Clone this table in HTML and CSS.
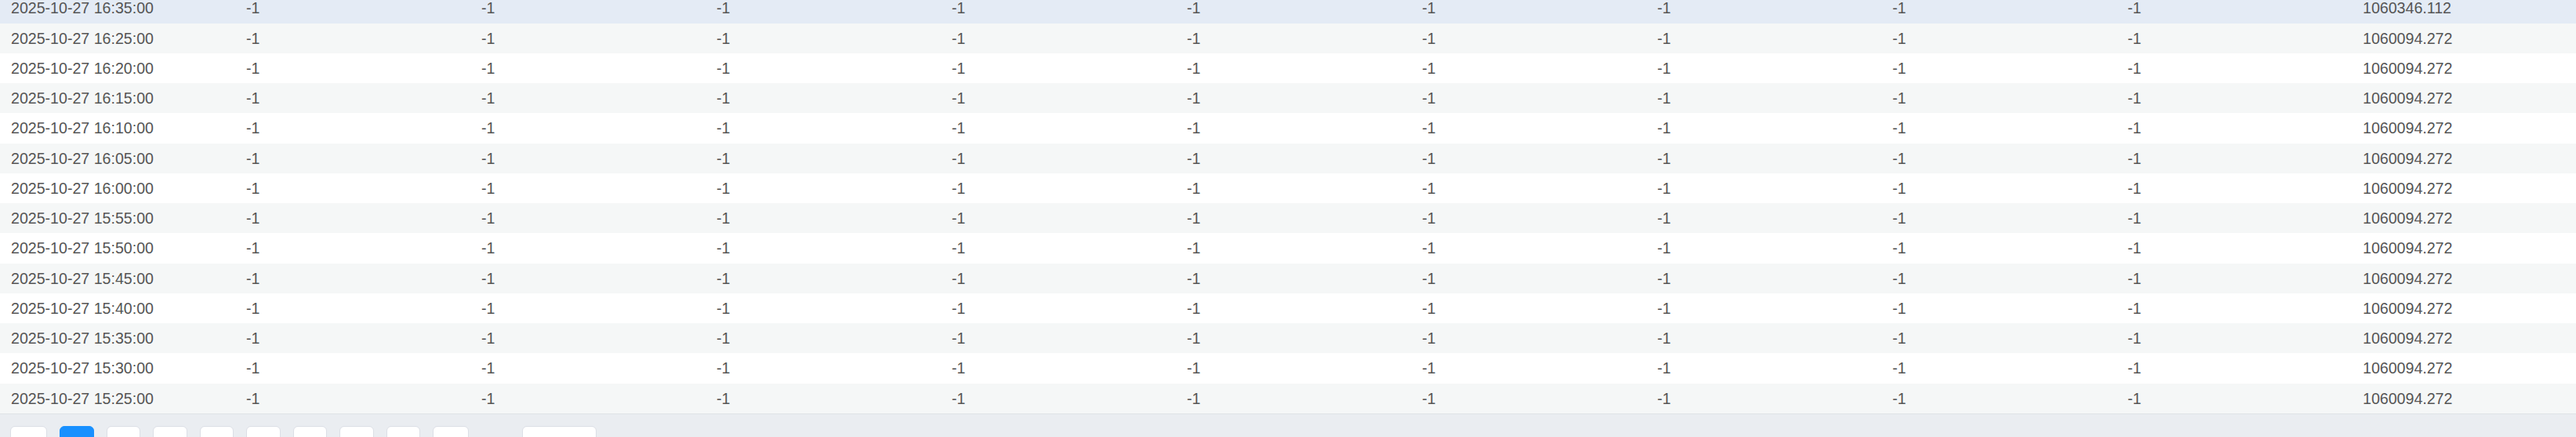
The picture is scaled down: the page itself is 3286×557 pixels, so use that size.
FILE: index.html
```html
<!DOCTYPE html>
<html>
<head>
<meta charset="utf-8">
<link rel="stylesheet" href="styles.css">
</head>
<body>
<div class="page">
  <div class="table-wrap">
    <table class="grid">
      <colgroup>
        <col><col><col><col><col><col><col><col><col><col><col>
      </colgroup>
      <tbody>
        <tr class="hover"><td>2025-10-27 16:35:00</td><td>-1</td><td>-1</td><td>-1</td><td>-1</td><td>-1</td><td>-1</td><td>-1</td><td>-1</td><td>-1</td><td>1060346.112</td></tr>
        <tr class="stripe"><td>2025-10-27 16:25:00</td><td>-1</td><td>-1</td><td>-1</td><td>-1</td><td>-1</td><td>-1</td><td>-1</td><td>-1</td><td>-1</td><td>1060094.272</td></tr>
        <tr><td>2025-10-27 16:20:00</td><td>-1</td><td>-1</td><td>-1</td><td>-1</td><td>-1</td><td>-1</td><td>-1</td><td>-1</td><td>-1</td><td>1060094.272</td></tr>
        <tr class="stripe"><td>2025-10-27 16:15:00</td><td>-1</td><td>-1</td><td>-1</td><td>-1</td><td>-1</td><td>-1</td><td>-1</td><td>-1</td><td>-1</td><td>1060094.272</td></tr>
        <tr><td>2025-10-27 16:10:00</td><td>-1</td><td>-1</td><td>-1</td><td>-1</td><td>-1</td><td>-1</td><td>-1</td><td>-1</td><td>-1</td><td>1060094.272</td></tr>
        <tr class="stripe"><td>2025-10-27 16:05:00</td><td>-1</td><td>-1</td><td>-1</td><td>-1</td><td>-1</td><td>-1</td><td>-1</td><td>-1</td><td>-1</td><td>1060094.272</td></tr>
        <tr><td>2025-10-27 16:00:00</td><td>-1</td><td>-1</td><td>-1</td><td>-1</td><td>-1</td><td>-1</td><td>-1</td><td>-1</td><td>-1</td><td>1060094.272</td></tr>
        <tr class="stripe"><td>2025-10-27 15:55:00</td><td>-1</td><td>-1</td><td>-1</td><td>-1</td><td>-1</td><td>-1</td><td>-1</td><td>-1</td><td>-1</td><td>1060094.272</td></tr>
        <tr><td>2025-10-27 15:50:00</td><td>-1</td><td>-1</td><td>-1</td><td>-1</td><td>-1</td><td>-1</td><td>-1</td><td>-1</td><td>-1</td><td>1060094.272</td></tr>
        <tr class="stripe"><td>2025-10-27 15:45:00</td><td>-1</td><td>-1</td><td>-1</td><td>-1</td><td>-1</td><td>-1</td><td>-1</td><td>-1</td><td>-1</td><td>1060094.272</td></tr>
        <tr><td>2025-10-27 15:40:00</td><td>-1</td><td>-1</td><td>-1</td><td>-1</td><td>-1</td><td>-1</td><td>-1</td><td>-1</td><td>-1</td><td>1060094.272</td></tr>
        <tr class="stripe"><td>2025-10-27 15:35:00</td><td>-1</td><td>-1</td><td>-1</td><td>-1</td><td>-1</td><td>-1</td><td>-1</td><td>-1</td><td>-1</td><td>1060094.272</td></tr>
        <tr><td>2025-10-27 15:30:00</td><td>-1</td><td>-1</td><td>-1</td><td>-1</td><td>-1</td><td>-1</td><td>-1</td><td>-1</td><td>-1</td><td>1060094.272</td></tr>
        <tr class="stripe"><td>2025-10-27 15:25:00</td><td>-1</td><td>-1</td><td>-1</td><td>-1</td><td>-1</td><td>-1</td><td>-1</td><td>-1</td><td>-1</td><td>1060094.272</td></tr>
      </tbody>
    </table>
  </div>
  <div class="pager">
    <button class="pg prev"></button>
    <button class="pg num active"></button>
    <button class="pg num"></button>
    <button class="pg num"></button>
    <button class="pg num"></button>
    <button class="pg num"></button>
    <button class="pg num"></button>
    <button class="pg num"></button>
    <button class="pg num"></button>
    <button class="pg next"></button>
    <div class="jump"></div>
  </div>
</div>
</body>
</html>
```

FILE: styles.css
```css
html, body {
  margin: 0;
  padding: 0;
  background: #eaedf1;
  overflow: hidden;
}

.page {
  width: 100%;
  height: 557px;
  overflow: hidden;
  font-family: "Liberation Sans", Arial, sans-serif;
  font-size: 19.6px;
  color: #555555;
}

.table-wrap {
  width: 100%;
  overflow: hidden;
  margin-top: -8.55px;
  border-bottom: 1px solid #dfe2e6;
  background: #ffffff;
}

.grid {
  width: 3300px;
  border-collapse: collapse;
  table-layout: fixed;
}

.grid col {
  width: 300px;
}

.grid td {
  height: 38.25px;
  padding: 0 0 0 14px;
  box-sizing: border-box;
  white-space: nowrap;
  line-height: 38.25px;
  vertical-align: middle;
}

.grid tr {
  background: #ffffff;
}

.grid tr.stripe {
  background: #f5f7f7;
}

.grid tr.hover {
  background: #e4ebf5;
}

.pager {
  display: flex;
  align-items: flex-start;
  padding: 15px 0 0 13px;
  gap: 16px;
}

.pg {
  height: 40px;
  background: #ffffff;
  border: 1px solid #dcdfe6;
  border-radius: 6px;
  padding: 0;
  box-sizing: border-box;
}

.pg.prev {
  width: 47px;
}

.pg.num {
  width: 43.5px;
}

.pg.next {
  width: 46px;
}

.pg.active {
  background: #1890ff;
  border-color: #1890ff;
}

.jump {
  width: 95px;
  height: 40px;
  margin-left: 52px;
  background: #ffffff;
  border: 1px solid #dcdfe6;
  border-radius: 6px;
  box-sizing: border-box;
}
```
